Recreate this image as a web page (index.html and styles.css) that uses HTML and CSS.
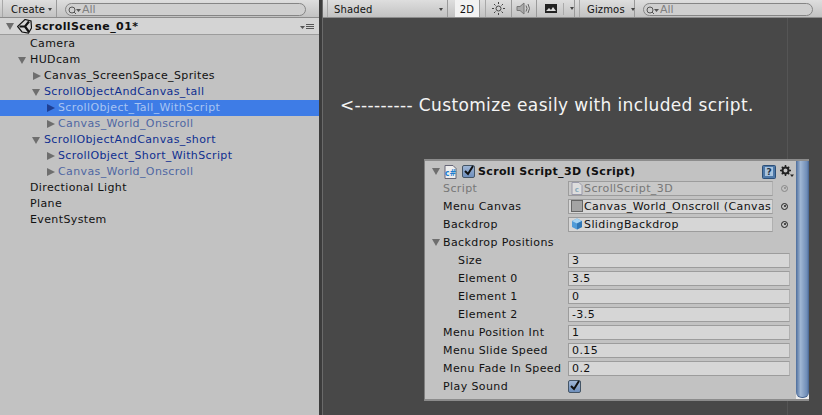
FILE: index.html
```html
<!DOCTYPE html>
<html lang="en">
<head>
<meta charset="utf-8">
<title>Scroll Script</title>
<link rel="stylesheet" href="styles.css">
</head>
<body>
<div class="app">
  <section class="hier">
    <div class="bar">
      <div class="btn create">Create <span class="caret"></span></div>
      <div class="search"><svg class="mag" width="14" height="10" viewBox="0 0 14 10"><circle cx="4" cy="5" r="3" fill="none" stroke="#555"/><path d="M6 7l2 2" stroke="#555"/><path d="M8 4h5l-2.500 3z" fill="#555"/></svg><span>All</span></div>
    </div>
    <div class="scene-head">
      <span class="tri down"></span>
      <svg class="unity" width="15" height="15" viewBox="0 0 15 15"><path d="M8 .5l6 1.500 .5 7-3 5-6.500-1L.5 7.500z" fill="none" stroke="#111" stroke-width="1.200"/><path d="M2.500 7.500H8L12 2.500M8 7.500l4 5.500" fill="none" stroke="#111" stroke-width="2.200"/></svg>
      <b>scrollScene_01*</b>
      <svg class="menu" width="15" height="6" viewBox="0 0 15 6"><path d="M0 2h5l-2.500 3z" fill="#555"/><path d="M6 .5h8M6 2.500h8M6 4.500h8" stroke="#555"/></svg>
    </div>
    <ul class="tree">
      <li class="i1">Camera</li>
      <li class="i1"><span class="tri down"></span>HUDcam</li>
      <li class="i2"><span class="tri right"></span>Canvas_ScreenSpace_Sprites</li>
      <li class="i2 blue"><span class="tri down"></span>ScrollObjectAndCanvas_tall</li>
      <li class="i3 sel"><span class="tri right"></span>ScrollObject_Tall_WithScript</li>
      <li class="i3 dim"><span class="tri right"></span>Canvas_World_Onscroll</li>
      <li class="i2 blue"><span class="tri down"></span>ScrollObjectAndCanvas_short</li>
      <li class="i3 blue"><span class="tri right"></span>ScrollObject_Short_WithScript</li>
      <li class="i3 dim"><span class="tri right"></span>Canvas_World_Onscroll</li>
      <li class="i1">Directional Light</li>
      <li class="i1">Plane</li>
      <li class="i1">EventSystem</li>
    </ul>
  </section>
  <section class="scene">
    <div class="bar">
      <div class="btn shaded">Shaded<span class="caret"></span></div>
      <div class="btn two">2D</div>
      <div class="btn sun"><svg width="15" height="15" viewBox="0 0 15 15"><circle cx="7.500" cy="7.500" r="2.500" fill="none" stroke="#444"/><path d="M7.500 1v2M7.500 12v2M1 7.500h2M12 7.500h2M3 3l1.500 1.500M10.500 10.500L12 12M3 12l1.500-1.500M10.500 4.500L12 3" stroke="#444"/></svg></div>
      <div class="btn audio"><svg width="16" height="13" viewBox="0 0 16 13"><path d="M1 4.500h3L8 1v11L4 8.500H1z" fill="#aaa" stroke="#777"/><path d="M10 3.500q2 3 0 6M12 2q3 4.500 0 9" fill="none" stroke="#666"/></svg></div>
      <div class="btn img"><svg width="12" height="9" viewBox="0 0 12 9"><rect width="12" height="9" fill="#222"/><path d="M1 7l3-3 2 2 2-3 3 4z" fill="#ddd"/></svg><i></i><span class="caret"></span></div>
      <div class="btn gizmos">Gizmos<span class="caret"></span></div>
      <div class="search"><svg class="mag" width="14" height="10" viewBox="0 0 14 10"><circle cx="4" cy="5" r="3" fill="none" stroke="#555"/><path d="M6 7l2 2" stroke="#555"/><path d="M8 4h5l-2.500 3z" fill="#555"/></svg><span>All</span></div>
    </div>
    <div class="view">
      <p class="note">&lt;--------- Customize easily with included script.</p>
      <div class="guide"></div>
      <div class="insp">
        <div class="panel">
          <div class="comp-head">
            <span class="tri down"></span>
            <svg class="cs" width="13" height="14" viewBox="0 0 13 14"><path d="M1 .5h8l3 3v10H1z" fill="#eee" stroke="#667"/><text x="6.500" y="10.500" text-anchor="middle" class="cs-t">c#</text></svg>
            <span class="check"><svg width="12" height="12" viewBox="0 0 12 12"><path d="M2 6l3 3 5-8" fill="none" stroke="#111" stroke-width="2"/></svg></span>
            <b>Scroll Script_3D (Script)</b>
            <svg class="help" width="14" height="14" viewBox="0 0 14 14"><rect x=".5" y=".5" width="13" height="13" rx="1" fill="#4f79a8" stroke="#2c4f78"/><rect x="3" y="2" width="8" height="9" fill="#a9c3de"/><text x="7" y="10" text-anchor="middle" class="help-t">?</text></svg>
            <svg class="gear" width="14" height="13" viewBox="0 0 14 13"><circle cx="5.500" cy="5.500" r="3" fill="none" stroke="#222" stroke-width="2"/><path d="M5.500 0v2M5.500 9v2M0 5.500h2M9 5.500h2M1.800 1.800l1.400 1.400M7.800 7.800l1.400 1.400M1.800 9.200l1.400-1.400M7.800 3.200l1.400-1.400" stroke="#222" stroke-width="1.500"/><path d="M10 9.500h4L12 12z" fill="#222"/></svg>
          </div>
          <div class="row off"><label>Script</label><div class="field ref"><svg width="12" height="13" viewBox="0 0 12 13"><path d="M1 .5h7l3 3v9H1z" fill="#ddd" stroke="#99a"/><text x="6" y="10" text-anchor="middle" class="cs-t2">c</text></svg>ScrollScript_3D</div><span class="dot"></span></div>
          <div class="row"><label>Menu Canvas</label><div class="field ref"><span class="swatch"></span>Canvas_World_Onscroll (Canvas</div><span class="dot"></span></div>
          <div class="row"><label>Backdrop</label><div class="field ref"><svg width="12" height="12" viewBox="0 0 12 12"><path d="M6 .5l5 2.500v6l-5 2.500-5-2.500V3z" fill="#4f9bd8"/><path d="M6 .5l5 2.500-5 2.500L1 3z" fill="#a8d4f2"/><path d="M6 5.500v6l5-2.500V3z" fill="#2f76b5"/></svg>SlidingBackdrop</div><span class="dot"></span></div>
          <div class="row head"><span class="tri down"></span>Backdrop Positions</div>
          <div class="row sub"><label>Size</label><div class="field">3</div></div>
          <div class="row sub"><label>Element 0</label><div class="field">3.5</div></div>
          <div class="row sub"><label>Element 1</label><div class="field">0</div></div>
          <div class="row sub"><label>Element 2</label><div class="field">-3.5</div></div>
          <div class="row"><label>Menu Position Int</label><div class="field">1</div></div>
          <div class="row"><label>Menu Slide Speed</label><div class="field">0.15</div></div>
          <div class="row"><label>Menu Fade In Speed</label><div class="field">0.2</div></div>
          <div class="row"><label>Play Sound</label><span class="check"><svg width="12" height="12" viewBox="0 0 12 12"><path d="M2 6l3 3 5-8" fill="none" stroke="#111" stroke-width="2"/></svg></span></div>
        </div>
        <div class="track"><div class="thumb"></div></div>
      </div>
    </div>
  </section>
</div>
</body>
</html>
```

FILE: styles.css
```css
* { box-sizing: border-box; }
html, body { margin: 0; height: 100%; overflow: hidden; }
body { font: 11px "DejaVu Sans", sans-serif; color: #111; background: #3c3c3c; }
.app { display: flex; width: 822px; height: 415px; }

.hier { width: 319px; background: #c2c2c2; flex: none; }
.scene { flex: 1; margin-left: 3px; display: flex; flex-direction: column; background: #484848; border-left: 1px solid #6a6a6a; }

.bar { height: 18px; display: flex; align-items: stretch; background: linear-gradient(#dedede, #c2c2c2); border-bottom: 1px solid #8c8c8c; }
.btn { display: flex; align-items: center; padding-top: 2px; border-right: 1px solid #9a9a9a; font-size: 10px; letter-spacing: .15px; position: relative; }
.caret { width: 0; height: 0; border: 2.500px solid transparent; border-top: 3px solid #444; border-bottom: 0; }

.create { width: 55px; margin-left: 2px; padding-left: 8px; gap: 3px; border-left: 1px solid #a8a8a8; }
.search { margin: 3px 0 0 8px; height: 13px; border: 1px solid #858585; border-radius: 7px; background: #cfcfcf; display: flex; align-items: center; padding-left: 2px; color: #808080; font-size: 11px; line-height: 10px; }
.hier .search { width: 241px; }
.mag { flex: none; }
.mag + span { margin-left: 0; }

.scene-head { height: 17px; display: flex; align-items: center; padding-top: 1px; background: #d4d4d4; border-bottom: 1px solid #9c9c9c; padding-left: 6px; position: relative; }
.scene-head b { font-size: 11px; letter-spacing: .4px; }
.scene-head .tri { margin-right: 3px; }
.unity { margin-right: 3px; }
.menu { margin-left: auto; margin-right: 4px; }

.tri { display: inline-block; width: 0; height: 0; flex: none; }
.tri.down { border-left: 4px solid transparent; border-right: 4px solid transparent; border-top: 7px solid #6e6e6e; }
.tri.right { border-top: 4px solid transparent; border-bottom: 4px solid transparent; border-left: 8px solid #6e6e6e; }

.tree { list-style: none; margin: 0; padding: 1px 0 0; }
.tree li { height: 16px; line-height: 16px; display: flex; align-items: center; white-space: nowrap; letter-spacing: .38px; position: relative; }
.tree .i1 { padding-left: 30px; }
.tree .i2 { padding-left: 44px; }
.tree .i3 { padding-left: 58px; }
.tree .tri { position: absolute; }
.tree .i1 .tri { left: 18px; top: 5px; }
.tree .i2 .tri.down { left: 32px; top: 5px; }
.tree .i2 .tri.right { left: 33px; top: 4px; }
.tree .i3 .tri { left: 47px; top: 4px; }
.blue { color: #0f2f90; }
.dim { color: #4f67a3; }
.sel { background: #3e7ce6; color: #a8c4f2; }
.tree .sel .tri.right { border-left-color: #1f3f92; }

.scene .bar { padding-left: 4px; }
.shaded { width: 121px; padding-left: 6px; justify-content: space-between; padding-right: 4px; border-left: 1px solid #a8a8a8; }
.two { width: 25px; margin-left: 7px; justify-content: center; background: #f2f2f2; }
.sun { width: 27px; margin-left: 5px; justify-content: center; border-left: 1px solid #a8a8a8; padding-top: 0; }
.audio { width: 25px; justify-content: center; padding-top: 0; }
.img { width: 38px; padding: 0 0 0 8px; gap: 6px; }
.img i { width: 1px; height: 12px; background: #aaa; }
.gizmos { width: 56px; margin-left: 4px; padding-left: 7px; gap: 6px; border-left: 1px solid #a8a8a8; }
.scene .search { width: 170px; }

.view { flex: 1; position: relative; padding: 76px 0 0 17px; }
.note { margin: 0; color: #f4f4f4; font: 17px "DejaVu Sans", sans-serif; letter-spacing: .36px; white-space: nowrap; line-height: 23px; }
.guide { position: absolute; left: 464px; top: 0; bottom: 0; width: 1px; background: #555; }
.insp { position: absolute; left: 101px; top: 141px; width: 385px; height: 242px; display: flex; background: #c2c2c2; border: 1px solid #7f7f7f; border-top: 2px solid #8c8c8c; border-bottom: 2px solid #8c8c8c; border-right: 0; }
.panel { flex: 1; min-width: 0; padding: 0 0 0 6px; }
.track { width: 13px; background: linear-gradient(#cfcfcf 90%, #efefef); }
.thumb { height: 237px; background: linear-gradient(90deg, #4d6d9c, #9fb6d3 35%, #6d8bb6 85%, #45628e); border-radius: 0 0 6px 6px; border-bottom: 1px solid #45628e; }

.comp-head { height: 18px; padding-top: 3px; display: flex; align-items: center; margin-left: -5px; padding-left: 6px; }
.comp-head b { letter-spacing: .35px; margin-left: 3px; white-space: nowrap; }
.cs { margin-left: 4px; margin-right: 5px; flex: none; }
.cs-t { font: bold 8px "DejaVu Sans", sans-serif; fill: #1f7fcf; }
.cs-t2 { font: bold 7px "DejaVu Sans", sans-serif; fill: #8ab; }
.help-t { font: bold 9px "DejaVu Sans", sans-serif; fill: #234; }
.help { margin-left: auto; flex: none; }
.gear { margin: 0 2px 0 4px; flex: none; }
.check { width: 13px; height: 13px; border: 1px solid #456; border-radius: 2px; background: linear-gradient(#9fb6d6, #6f8fbc); display: block; flex: none; }
.check svg { display: block; margin: -1px 0 0 0; }

.row { height: 18.050px; display: flex; align-items: center; letter-spacing: .4px; white-space: nowrap; }
.row label { width: 137px; flex: none; padding-left: 12px; }
.row.off { color: #777; }
.row.head { padding-left: 1px; }
.row.head .tri { margin: 0 3px 0 0; }
.row.sub label { padding-left: 27px; }
.field { height: 15px; width: 222px; flex: none; background: #d6d6d6; border: 1px solid #9c9c9c; border-right-color: #b0b0b0; display: flex; align-items: center; padding-left: 3px; overflow: hidden; color: #111; }
.ref { width: 205px; gap: 1px; padding-left: 2px; }
.row.off .field { background: #c8c8c8; color: #777; }
.swatch { width: 12px; height: 12px; background: #a4a4a4; border: 1px solid #666; flex: none; }
.dot { width: 7px; height: 7px; border: 1px solid #222; border-radius: 50%; margin-left: 8px; position: relative; flex: none; }
.dot::after { content: ""; position: absolute; left: 1.500px; top: 1.500px; width: 2px; height: 2px; background: #222; border-radius: 50%; }
.row.off .dot { border-color: #888; }
.row.off .dot::after { background: #888; }
```
